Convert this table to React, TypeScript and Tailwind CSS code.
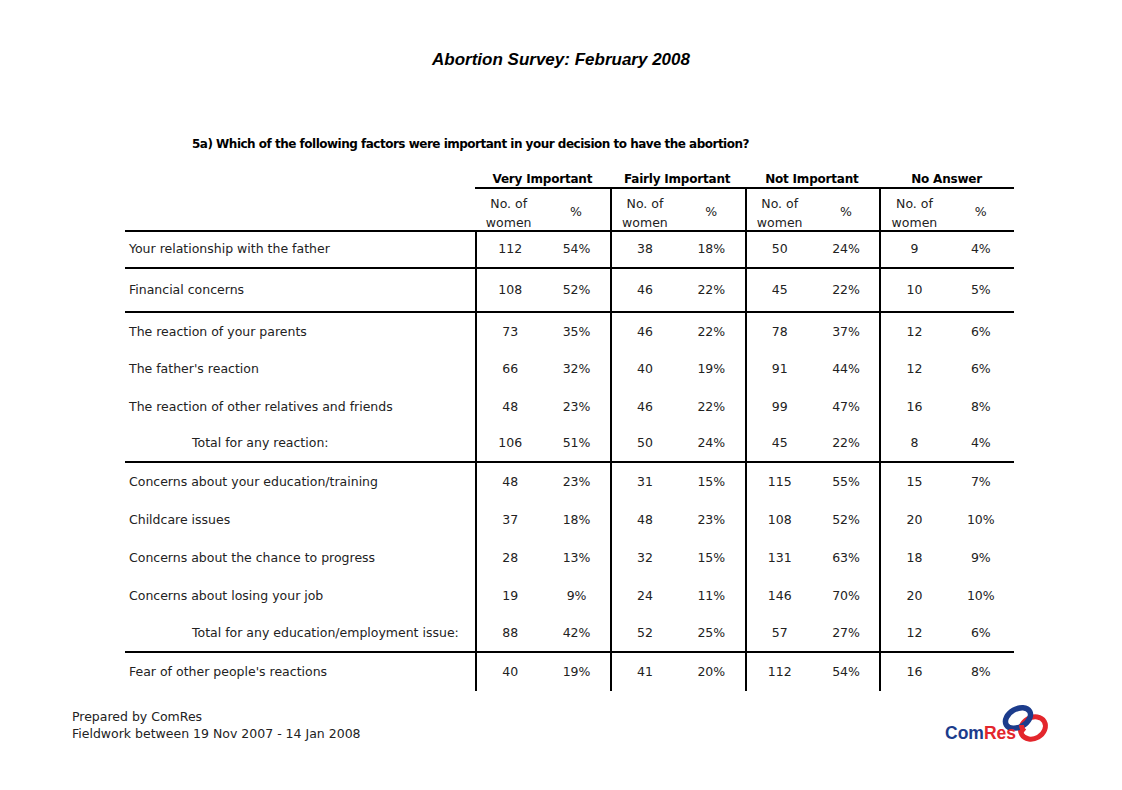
const groups = ["Very Important", "Fairly Important", "Not Important", "No Answer"];

type Row = {
  label: string;
  vals: string[];
  total?: boolean;
  h: string;
  line?: boolean;
};

const rows: Row[] = [
  { label: "Your relationship with the father", vals: ["112", "54%", "38", "18%", "50", "24%", "9", "4%"], h: "h-[37px]", line: true },
  { label: "Financial concerns", vals: ["108", "52%", "46", "22%", "45", "22%", "10", "5%"], h: "h-[44px]", line: true },
  { label: "The reaction of your parents", vals: ["73", "35%", "46", "22%", "78", "37%", "12", "6%"], h: "h-[38px]" },
  { label: "The father's reaction", vals: ["66", "32%", "40", "19%", "91", "44%", "12", "6%"], h: "h-[37px]" },
  { label: "The reaction of other relatives and friends", vals: ["48", "23%", "46", "22%", "99", "47%", "16", "8%"], h: "h-[38px]" },
  { label: "Total for any reaction:", vals: ["106", "51%", "50", "24%", "45", "22%", "8", "4%"], total: true, h: "h-[37px]", line: true },
  { label: "Concerns about your education/training", vals: ["48", "23%", "31", "15%", "115", "55%", "15", "7%"], h: "h-[38px]" },
  { label: "Childcare issues", vals: ["37", "18%", "48", "23%", "108", "52%", "20", "10%"], h: "h-[38px]" },
  { label: "Concerns about the chance to progress", vals: ["28", "13%", "32", "15%", "131", "63%", "18", "9%"], h: "h-[38px]" },
  { label: "Concerns about losing your job", vals: ["19", "9%", "24", "11%", "146", "70%", "20", "10%"], h: "h-[38px]" },
  { label: "Total for any education/employment issue:", vals: ["88", "42%", "52", "25%", "57", "27%", "12", "6%"], total: true, h: "h-[38px]", line: true },
  { label: "Fear of other people's reactions", vals: ["40", "19%", "41", "20%", "112", "54%", "16", "8%"], h: "h-[38px]" },
];

// ComRes logo: wordmark plus two linked rings
function Logo() {
  return (
    <div className="relative w-[105px] h-[45px]">
      <svg className="absolute left-0 top-0" width="105" height="45" viewBox="0 0 105 45">
        <ellipse cx="88" cy="24" rx="13" ry="10.5" transform="rotate(-30 88 24)" fill="none" stroke="#e3262c" strokeWidth="5" />
        <ellipse cx="73" cy="14" rx="13.5" ry="9" transform="rotate(-30 73 14)" fill="none" stroke="#1c3c8c" strokeWidth="5.5" />
        <path d="M79.5 27.5 A13 10.5 -30 0 1 76.5 21" fill="none" stroke="#e3262c" strokeWidth="5" />
      </svg>
      <div className="absolute left-0 top-[19px] text-[17.5px] leading-[20px] font-bold font-['Liberation_Sans',sans-serif]">
        <span className="text-[#1c3c8c]">Com</span>
        <span className="text-[#e3262c]">Res</span>
      </div>
    </div>
  );
}

export default function App() {
  return (
    <div className="w-[1122px] h-[790px] bg-white text-[#222] font-['DejaVu_Sans',sans-serif] flex flex-col">
      <h1 className="mt-[49px] text-center text-[17px] leading-[22px] font-bold italic text-black font-['Liberation_Sans',sans-serif]">
        Abortion Survey: February 2008
      </h1>

      <p className="mt-[65px] ml-[192px] text-[12px] leading-[16px] font-bold text-black tracking-[-0.5px]">
        5a) Which of the following factors were important in your decision to have the abortion?
      </p>

      <div className="mt-[19px] ml-[125px] w-[889px] text-[12.5px]">
        {/* group headers */}
        <div className="flex h-[18px]">
          <div className="w-[350px]" />
          {groups.map((g) => (
            <div key={g} className="w-[134.75px] border-b-2 border-black text-center text-[12px] font-bold text-black leading-[16px] tracking-[-0.2px]">
              {g}
            </div>
          ))}
        </div>
        {/* sub headers */}
        <div className="flex h-[43px] pt-[6px] border-b-2 border-black">
          <div className="w-[350px]" />
          {groups.map((g, i) => (
            <div key={g} className={`w-[134.75px] flex items-center ${i > 0 ? "border-l-2 border-black -mt-[6px] pt-[6px]" : ""}`}>
              <div className="w-1/2 text-center leading-[19px]">
                No. of
                <br />
                women
              </div>
              <div className="w-1/2 text-center">%</div>
            </div>
          ))}
        </div>
        {rows.map((r) => (
          <div key={r.label} className={`flex ${r.h} ${r.line ? "border-b-2 border-black" : ""}`}>
            <div className={`w-[350px] flex items-center ${r.total ? "pl-[67px]" : "pl-[4px]"}`}>{r.label}</div>
            {[0, 1, 2, 3].map((g) => (
              <div key={g} className="w-[134.75px] flex items-center border-l-2 border-black">
                <div className="w-1/2 text-center">{r.vals[g * 2]}</div>
                <div className="w-1/2 text-center">{r.vals[g * 2 + 1]}</div>
              </div>
            ))}
          </div>
        ))}
      </div>

      <div className="mt-[17px] ml-[72px] mr-[72px] flex items-start justify-between">
        <div className="text-[12.5px] leading-[17px]">
          <div>Prepared by ComRes</div>
          <div>Fieldwork between 19 Nov 2007 - 14 Jan 2008</div>
        </div>
        <div className="-mt-[4px]">
          <Logo />
        </div>
      </div>
    </div>
  );
}
